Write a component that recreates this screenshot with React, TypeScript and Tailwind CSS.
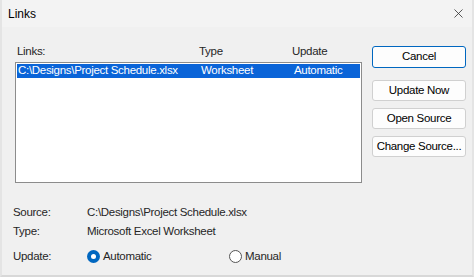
import { X } from "lucide-react"

function Btn({ label, primary }: { label: string; primary?: boolean }) {
  return (
    <button
      className={
        primary
          ? "h-[22px] w-[94px] whitespace-nowrap rounded-[3px] border border-[#0067c0] bg-[#fdfdfd] text-black"
          : "h-[21px] w-[94px] whitespace-nowrap rounded-[3px] border border-[#d0d0d0] bg-[#fdfdfd] text-black"
      }
    >
      {label}
    </button>
  )
}

function Radio({ checked, label }: { checked?: boolean; label: string }) {
  return (
    <div className="flex items-center gap-[3px]">
      {checked ? (
        <span className="flex h-[13px] w-[13px] items-center justify-center rounded-full bg-[#0067c0]">
          <span className="h-[5px] w-[5px] rounded-full bg-white" />
        </span>
      ) : (
        <span className="h-[13px] w-[13px] rounded-full border border-[#555] bg-white" />
      )}
      <span>{label}</span>
    </div>
  )
}

export default function App() {
  return (
    <div
      className="flex h-[277px] w-[474px] flex-col overflow-hidden border-x-2 border-b-2 border-x-[#e4e4e4] border-b-[#d8d8d8] bg-[#f0f0f0] text-[11.5px] tracking-[-0.3px] text-[#262626]"
      style={{ fontFamily: '"Liberation Sans", Arial, sans-serif' }}
    >
      <div className="flex h-[27px] shrink-0 items-center justify-between bg-[#f3f3f3] pl-[6px] pr-[6px]">
        <span className="text-[12px] tracking-normal text-black">Links</span>
        <X className="h-[15px] w-[15px] text-[#333]" strokeWidth={1.3} />
      </div>
      <div className="flex pt-[14px] pl-[13px] pr-[6px]">
        <div className="flex w-[347px] flex-col">
          <div className="flex h-[21px] items-center">
            <span className="w-[184px] pl-[2px]">Links:</span>
            <span className="w-[93px]">Type</span>
            <span>Update</span>
          </div>
          <div className="h-[121px] border border-[#8c8c8c] bg-white p-[1px]">
            <div className="flex h-[14px] items-center bg-[#0a64d8] text-white">
              <span className="w-[184px] whitespace-nowrap pl-[1px] leading-none">C:\Designs\Project Schedule.xlsx</span>
              <span className="w-[93px] leading-none">Worksheet</span>
              <span className="leading-none">Automatic</span>
            </div>
          </div>
        </div>
        <div className="ml-[10px] flex flex-col pt-[5px]">
          <Btn label="Cancel" primary />
          <div className="h-[12px]" />
          <div className="flex flex-col gap-[7px]">
            <Btn label="Update Now" />
            <Btn label="Open Source" />
            <Btn label="Change Source..." />
          </div>
        </div>
      </div>
      <div className="mt-[23px] flex flex-col gap-[5px] pl-[11px]">
        <div className="flex h-[14px] items-center">
          <span className="w-[74px]">Source:</span>
          <span>C:\Designs\Project Schedule.xlsx</span>
        </div>
        <div className="flex h-[14px] items-center">
          <span className="w-[74px]">Type:</span>
          <span>Microsoft Excel Worksheet</span>
        </div>
        <div className="mt-[4px] flex items-center">
          <span className="w-[74px]">Update:</span>
          <div className="w-[142px]">
            <Radio checked label="Automatic" />
          </div>
          <Radio label="Manual" />
        </div>
      </div>
    </div>
  )
}
